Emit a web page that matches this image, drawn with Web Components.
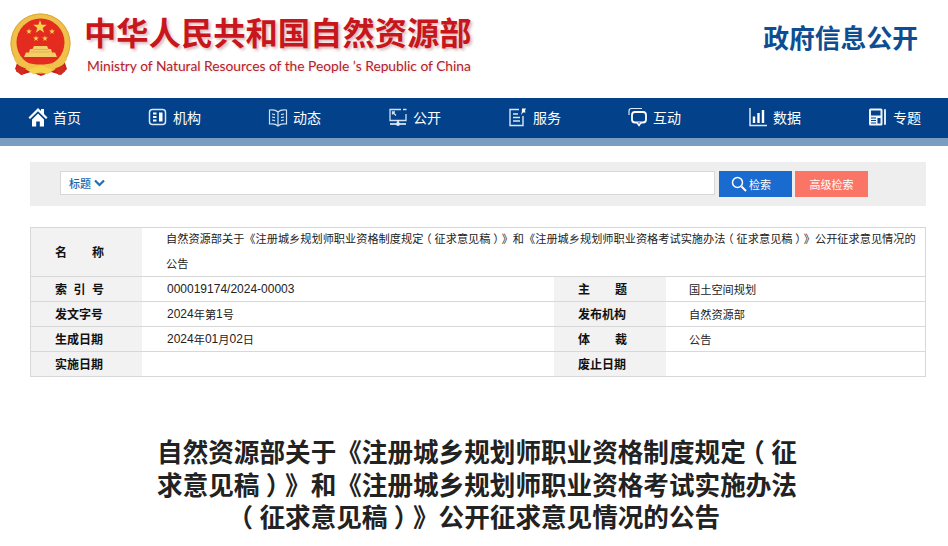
<!DOCTYPE html>
<html lang="zh-CN"><head><meta charset="utf-8"><title>政府信息公开</title>
<style>
html,body{margin:0;padding:0;background:#fff;overflow:hidden;height:546px}
body{font-family:"Noto Sans CJK SC","Liberation Sans",sans-serif;color:#222}
</style></head><body>
<gov-header></gov-header>
<gov-nav>
  <nav-item icon="home">首页</nav-item><nav-item icon="org">机构</nav-item><nav-item icon="book">动态</nav-item><nav-item icon="screen">公开</nav-item><nav-item icon="service">服务</nav-item><nav-item icon="chat">互动</nav-item><nav-item icon="chart">数据</nav-item><nav-item icon="news">专题</nav-item>
</gov-nav>
<search-bar></search-bar>
<info-table></info-table>
<article-title>
  <title-line><span>自然资源部关于《注册城乡规划师职业资格制度规定</span><paren-mark>（</paren-mark><span>征</span></title-line>
  <title-line><span>求意见稿</span><paren-mark>）</paren-mark><span>》和《注册城乡规划师职业资格考试实施办法</span></title-line>
  <title-line><paren-mark>（</paren-mark><span>征求意见稿</span><paren-mark>）</paren-mark><span>》公开征求意见情况的公告</span></title-line>
</article-title>
<script>
const star=(x,y,r)=>{let p=[];for(let i=0;i<10;i++){const a=-Math.PI/2+i*Math.PI/5,q=i%2?r*.4:r;p.push((x+q*Math.cos(a)).toFixed(1)+","+(y+q*Math.sin(a)).toFixed(1));}return `<polygon points="${p.join(" ")}" fill="#f7d54c"/>`;};
const emblem=`<svg width="64" height="66" viewBox="0 0 64 66" style="flex:none;display:block">
<path d="M10 44 L6 56 L12 62 L22 59 L32 63 L42 59 L52 62 L58 56 L54 44Z" fill="#c9211c"/>
<circle cx="31.500" cy="30.500" r="30" fill="#efc04a"/>
<circle cx="31.500" cy="30.500" r="29.500" fill="none" stroke="#dba93e" stroke-width="1"/>
<circle cx="31.500" cy="29.500" r="24" fill="#e32b20"/>
${star(31,14,7)}${star(20,18.500,3)}${star(27,25.500,3)}${star(36,25.500,3)}${star(43,18.500,3)}
<path d="M25 33h13l1.500 3H42l1 3.500h3l2 4.500H15l2-4.500h3l1-3.500h2.500z" fill="#f3cf6a"/>
<path d="M22 39h19M24 36.500h15" stroke="#e0a93f" stroke-width=".8"/>
<path d="M9 43c5 6 12 8.500 22.500 8.500S49 49 54 43l4 3c-3 8-13 12-26.500 12S8 54 5 46z" fill="#efc04a"/>
<path d="M19 57l12.500-5 12.500 5-5.500 4.500-7-2.500-7 2.500z" fill="#f6d24a"/>
<path d="M8 52l9 3.500-3.500 6.500-6.500-3.500zM55 52l-9 3.500 3.500 6.500 6.500-3.500z" fill="#d22b20"/>
</svg>`;
const icons={
home:`<svg viewBox="0 0 20 20" fill="#fff"><path d="M10 1 0.500 10.500 2 12 10 4.200 18 12l1.500-1.500L16 7V2h-3v2z"/><path d="M4 12.500 10 6.500l6 6V19.500h-4.200v-5H8.200v5H4z"/></svg>`,
org:`<svg viewBox="0 0 20 20" fill="none" stroke="#dbe8f5" stroke-width="1.500"><rect x="1.500" y="2.500" width="16" height="15" rx="3"/><path d="M5 6.500h3.500M5 10h3.500M5 13.500h3.500" stroke="#fff" stroke-width="2"/><rect x="11" y="5.500" width="3.500" height="9" fill="#fff" stroke="none"/></svg>`,
book:`<svg viewBox="0 0 20 20" fill="none" stroke="#cfe0f2" stroke-width="1.200"><path d="M10 5C8 3 4.500 2.500 1.500 3v14c3-.5 6.500 0 8.500 2 2-2 5.500-2.500 8.500-2V3c-3-.5-6.500 0-8.500 2zM10 5v14"/><path d="M4 7l3 .7M4 10l3 .7M4 13l3 .7M16 7l-3 .7M16 10l-3 .7M16 13l-3 .7"/></svg>`,
screen:`<svg viewBox="0 0 20 20" fill="none" stroke="#cfe0f2" stroke-width="1.300"><path d="M13 2.500H2v11h16V7"/><path d="M15 2.500h3.500M5 5.500l3 3M4.500 7.500V5h2.500"/><path d="M10 13.500v3M2 17h16" stroke="#fff" stroke-width="1.500"/><circle cx="10" cy="17" r="1.400" fill="#fff"/></svg>`,
service:`<svg viewBox="0 0 20 20" fill="none" stroke="#dbe8f5" stroke-width="1.400"><path d="M11 2.500H2v16h13V9"/><path d="M5 7h5M5 10.500h7M5 14h7"/><path d="M14 1.500h4l-1 2 .5 2-2.500 0-2 2.500 .8-3z" fill="#fff" stroke="none"/></svg>`,
chat:`<svg viewBox="0 0 20 20" fill="none" stroke="#fff" stroke-width="1.500"><path d="M1 8V4q0-2.500 2.500-2.500H14" stroke-width="1.200" stroke="#dbe8f5"/><rect x="4" y="5" width="14" height="10.500" rx="3" stroke-width="1.800"/><path d="M9 15.500l2 3 2-3" fill="#03428b" stroke-width="1.500"/></svg>`,
chart:`<svg viewBox="0 0 20 20" fill="none" stroke="#fff"><path d="M2 1v17.500h17" stroke="#dbe8f5" stroke-width="1.500"/><path d="M6 9.500V16M10.500 6v10M15 3v13" stroke-width="2.400"/></svg>`,
news:`<svg viewBox="0 0 20 20"><rect x="1" y="1.500" width="13.500" height="17" rx="1.500" fill="#eef4fa"/><rect x="3" y="3.500" width="9.500" height="5" fill="#03428b"/><path d="M3 11h5M3 13.500h5M3 16h5" stroke="#03428b" stroke-width="1.200"/><rect x="9.500" y="11" width="3" height="5.500" fill="#03428b"/><path d="M17 3v14" stroke="#dbe8f5" stroke-width="2" stroke-linecap="round"/></svg>`
};
function def(name,html){customElements.define(name,class extends HTMLElement{constructor(){super();this.attachShadow({mode:"open"}).innerHTML=html;}connectedCallback(){const s=this.shadowRoot.querySelector("[data-icon]");if(s)s.innerHTML=icons[this.getAttribute("icon")]||"";}});}
def("gov-header",`<style>
:host{display:flex;height:98px;box-sizing:border-box;background:#fff;padding:13px 30px 0 9px;justify-content:space-between;align-items:flex-start}
.left{display:flex;gap:11px}
.cn{font:700 32.300px/40px "Noto Sans CJK SC",sans-serif;color:#c8161d;text-shadow:2px 2px 3px rgba(120,0,0,.28);white-space:nowrap;margin-top:-2px}
.en{font:400 13.770px/18px Lato,sans-serif;color:#b3212a;white-space:nowrap;margin-top:6px;margin-left:3px;text-shadow:1px 1px 2px rgba(120,0,0,.15)}
.right{font:700 25.800px/36px "Noto Sans CJK SC",sans-serif;color:#0e4d92;margin-top:6px}
</style><div class="left">${emblem}<div><div class="cn">中华人民共和国自然资源部</div><div class="en">Ministry of Natural Resources of the People ʼs Republic of China</div></div></div><div class="right">政府信息公开</div>`);
def("gov-nav",`<style>
:host{display:block;border-bottom:8px solid #7b9dc2;background:#03428b}
.row{display:grid;grid-template-columns:repeat(8,120px);height:40px;box-sizing:border-box;padding:0 0 2px 28px;align-items:center}
</style><div class="row"><slot></slot></div>`);
def("nav-item",`<style>
:host{display:flex;align-items:center;gap:5px;color:#fff;font:400 14px/20px "Noto Sans CJK SC",sans-serif}
.i{display:block;width:20px;height:20px}
.i svg{display:block;width:20px;height:20px}
</style><span class="i" data-icon></span><slot></slot>`);
def("search-bar",`<style>
:host{display:flex;margin:16px 22px 21px 30px;height:44px;background:#eee;padding:9px 0 0 30px;box-sizing:border-box;align-items:flex-start}
.inp{width:655px;height:24px;box-sizing:border-box;background:#fff;border:1px solid #d8d8d8;display:flex;align-items:center;padding-left:8px;color:#1a66aa;font-size:11px;font-weight:500;gap:3px}
.b{height:26px;width:73px;box-sizing:border-box;color:#fff;font-size:11px;display:flex;align-items:center;gap:2px}
.s{background:#1a6bd0;margin-left:4px;padding-left:12px}
.a{background:#fb7567;margin-left:3px;justify-content:center}
svg{display:block}
</style><div class="inp">标题<svg width="11" height="8" viewBox="0 0 11 8" fill="none" stroke="#1f6fb5" stroke-width="2.200"><path d="M1 1.500l4.500 4.500L10 1.500"/></svg></div>
<div class="b s"><svg width="16" height="16" viewBox="0 0 16 16" fill="none" stroke="#fff"><circle cx="6.500" cy="6.500" r="5" stroke-width="1.500"/><path d="M10.500 10.500l4.500 4.500" stroke-width="2"/></svg>检索</div><div class="b a">高级检索</div>`);
def("info-table",`<style>
:host{display:grid;margin:0 22px 0 30px;grid-template-columns:111px 412px 112px 1fr;grid-template-rows:48px 25px 25px 25px 25px;border:1px solid #d8d8d8;box-sizing:border-box;height:150px;font-size:11.200px;color:#222}
.l{background:#f2f2f2;font-weight:700;font-size:12px;border-top:1px solid #d8d8d8;display:flex;align-items:center;padding:0 0 2px 24px;box-sizing:border-box;color:#111}
.l span{display:inline-block;width:49px;text-align:justify;text-align-last:justify}
.v{border-top:1px solid #d8d8d8;display:flex;align-items:center;padding:0 0 1px 25px;box-sizing:border-box}
.f{border-top:0}
.title{grid-column:2/5;padding:0 0 0 24px;display:block;margin-top:-2px;text-spacing-trim:space-all}
.title div{height:25px;line-height:25px;white-space:nowrap}
.title i{font-style:normal;display:inline-block;font-feature-settings:"halt";padding:0 .25em}
b{font:400 12px "Liberation Sans",sans-serif}
.w{padding-left:23px}
</style>
<div class="l f"><span>名称</span></div><div class="v f title"><div>自然资源部关于《注册城乡规划师职业资格制度规定<i>（</i>征求意见稿<i>）</i>》和《注册城乡规划师职业资格考试实施办法<i>（</i>征求意见稿<i>）</i>》公开征求意见情况的</div><div>公告</div></div>
<div class="l"><span>索引号</span></div><div class="v"><b>000019174/2024-00003</b></div><div class="l"><span>主题</span></div><div class="v w">国土空间规划</div>
<div class="l">发文字号</div><div class="v"><b>2024</b>年第<b>1</b>号</div><div class="l">发布机构</div><div class="v w">自然资源部</div>
<div class="l">生成日期</div><div class="v"><b>2024</b>年<b>01</b>月<b>02</b>日</div><div class="l"><span>体裁</span></div><div class="v w">公告</div>
<div class="l">实施日期</div><div class="v"></div><div class="l">废止日期</div><div class="v"></div>`);
def("article-title",`<style>
:host{display:block;margin:0 0 0 157px;padding-top:60px;width:640px;font:700 25.600px/32.500px "Liberation Sans","Noto Sans CJK SC",sans-serif;color:#222;text-spacing-trim:space-all}
</style><slot></slot>`);
def("title-line",`<style>
:host{display:block;text-align:center;white-space:nowrap;height:32.500px}
::slotted(*){display:inline-block}
</style><slot></slot>`);
def("paren-mark",`<style>
:host{display:inline-block;font-feature-settings:"halt";padding:0 .25em}
</style><slot></slot>`);
</script></body></html>
